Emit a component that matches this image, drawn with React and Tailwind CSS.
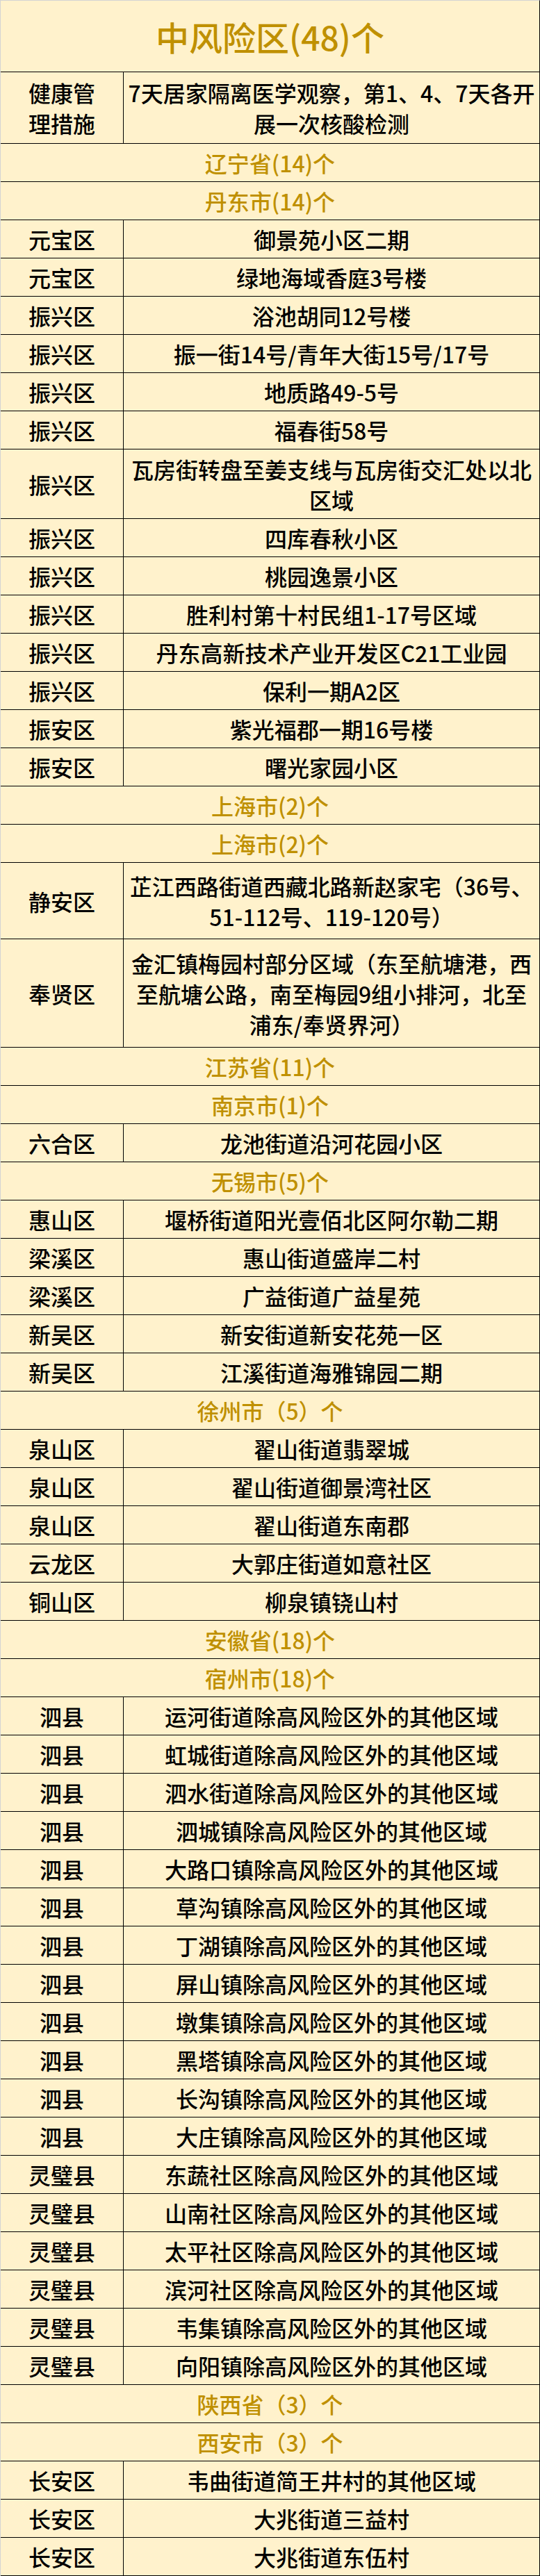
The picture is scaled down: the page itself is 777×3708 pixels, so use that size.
import React from 'react'

// 中风险区 list, one entry per table row
// string entries are gold header rows, arrays are [district, place(s), height]
const rows = [
  '辽宁省(14)个',
  '丹东市(14)个',
  ['元宝区', '御景苑小区二期'],
  ['元宝区', '绿地海域香庭3号楼'],
  ['振兴区', '浴池胡同12号楼'],
  ['振兴区', '振一街14号/青年大街15号/17号'],
  ['振兴区', '地质路49-5号'],
  ['振兴区', '福春街58号'],
  ['振兴区', ['瓦房街转盘至姜支线与瓦房街交汇处以北', '区域'], 'h-[100px]'],
  ['振兴区', '四库春秋小区'],
  ['振兴区', '桃园逸景小区'],
  ['振兴区', '胜利村第十村民组1-17号区域'],
  ['振兴区', '丹东高新技术产业开发区C21工业园'],
  ['振兴区', '保利一期A2区'],
  ['振安区', '紫光福郡一期16号楼'],
  ['振安区', '曙光家园小区'],
  '上海市(2)个',
  '上海市(2)个',
  ['静安区', ['芷江西路街道西藏北路新赵家宅（36号、', '51-112号、119-120号）'], 'h-[110px]'],
  [
    '奉贤区',
    ['金汇镇梅园村部分区域（东至航塘港，西', '至航塘公路，南至梅园9组小排河，北至', '浦东/奉贤界河）'],
    'h-[156px]',
  ],
  '江苏省(11)个',
  '南京市(1)个',
  ['六合区', '龙池街道沿河花园小区'],
  '无锡市(5)个',
  ['惠山区', '堰桥街道阳光壹佰北区阿尔勒二期'],
  ['梁溪区', '惠山街道盛岸二村'],
  ['梁溪区', '广益街道广益星苑'],
  ['新吴区', '新安街道新安花苑一区'],
  ['新吴区', '江溪街道海雅锦园二期'],
  '徐州市（5）个',
  ['泉山区', '翟山街道翡翠城'],
  ['泉山区', '翟山街道御景湾社区'],
  ['泉山区', '翟山街道东南郡'],
  ['云龙区', '大郭庄街道如意社区'],
  ['铜山区', '柳泉镇铙山村'],
  '安徽省(18)个',
  '宿州市(18)个',
  ['泗县', '运河街道除高风险区外的其他区域'],
  ['泗县', '虹城街道除高风险区外的其他区域'],
  ['泗县', '泗水街道除高风险区外的其他区域'],
  ['泗县', '泗城镇除高风险区外的其他区域'],
  ['泗县', '大路口镇除高风险区外的其他区域'],
  ['泗县', '草沟镇除高风险区外的其他区域'],
  ['泗县', '丁湖镇除高风险区外的其他区域'],
  ['泗县', '屏山镇除高风险区外的其他区域'],
  ['泗县', '墩集镇除高风险区外的其他区域'],
  ['泗县', '黑塔镇除高风险区外的其他区域'],
  ['泗县', '长沟镇除高风险区外的其他区域'],
  ['泗县', '大庄镇除高风险区外的其他区域'],
  ['灵璧县', '东蔬社区除高风险区外的其他区域'],
  ['灵璧县', '山南社区除高风险区外的其他区域'],
  ['灵璧县', '太平社区除高风险区外的其他区域'],
  ['灵璧县', '滨河社区除高风险区外的其他区域'],
  ['灵璧县', '韦集镇除高风险区外的其他区域'],
  ['灵璧县', '向阳镇除高风险区外的其他区域'],
  '陕西省（3）个',
  '西安市（3）个',
  ['长安区', '韦曲街道简王井村的其他区域'],
  ['长安区', '大兆街道三益村'],
  ['长安区', '大兆街道东伍村'],
]

function Lines({ value }) {
  const lines = Array.isArray(value) ? value : [value]
  return lines.map((line, i) => (
    <div key={i} className="whitespace-nowrap">
      {line}
    </div>
  ))
}

function HeaderRow({ text }) {
  return (
    <div className="flex h-[55px] items-center justify-center border-b border-black text-[#bf9000]">
      {text}
    </div>
  )
}

function DataRow({ district, place, height }) {
  return (
    <div className={`flex border-b border-black ${height || 'h-[55px]'}`}>
      <div className="flex w-[177px] shrink-0 flex-col items-center justify-center border-r border-black">
        <Lines value={district} />
      </div>
      <div className="flex flex-1 flex-col items-center justify-center">
        <Lines value={place} />
      </div>
    </div>
  )
}

export default function App() {
  return (
    <div className="w-[777px] border-x border-t border-[#d4d4d4] border-r-black bg-[#fff2cc] text-center font-['Noto_Sans_CJK_SC','Noto_Sans',sans-serif] text-[32px] font-medium leading-[44px] text-black">
      <div className="flex h-[103px] items-center justify-center border-b border-black text-[48px] leading-none text-[#bf9000]">
        中风险区(48)个
      </div>
      <DataRow
        district={['健康管', '理措施']}
        place={['7天居家隔离医学观察，第1、4、7天各开', '展一次核酸检测']}
        height="h-[103px]"
      />
      {rows.map((row, i) =>
        typeof row === 'string' ? (
          <HeaderRow key={i} text={row} />
        ) : (
          <DataRow key={i} district={row[0]} place={row[1]} height={row[2]} />
        )
      )}
    </div>
  )
}
